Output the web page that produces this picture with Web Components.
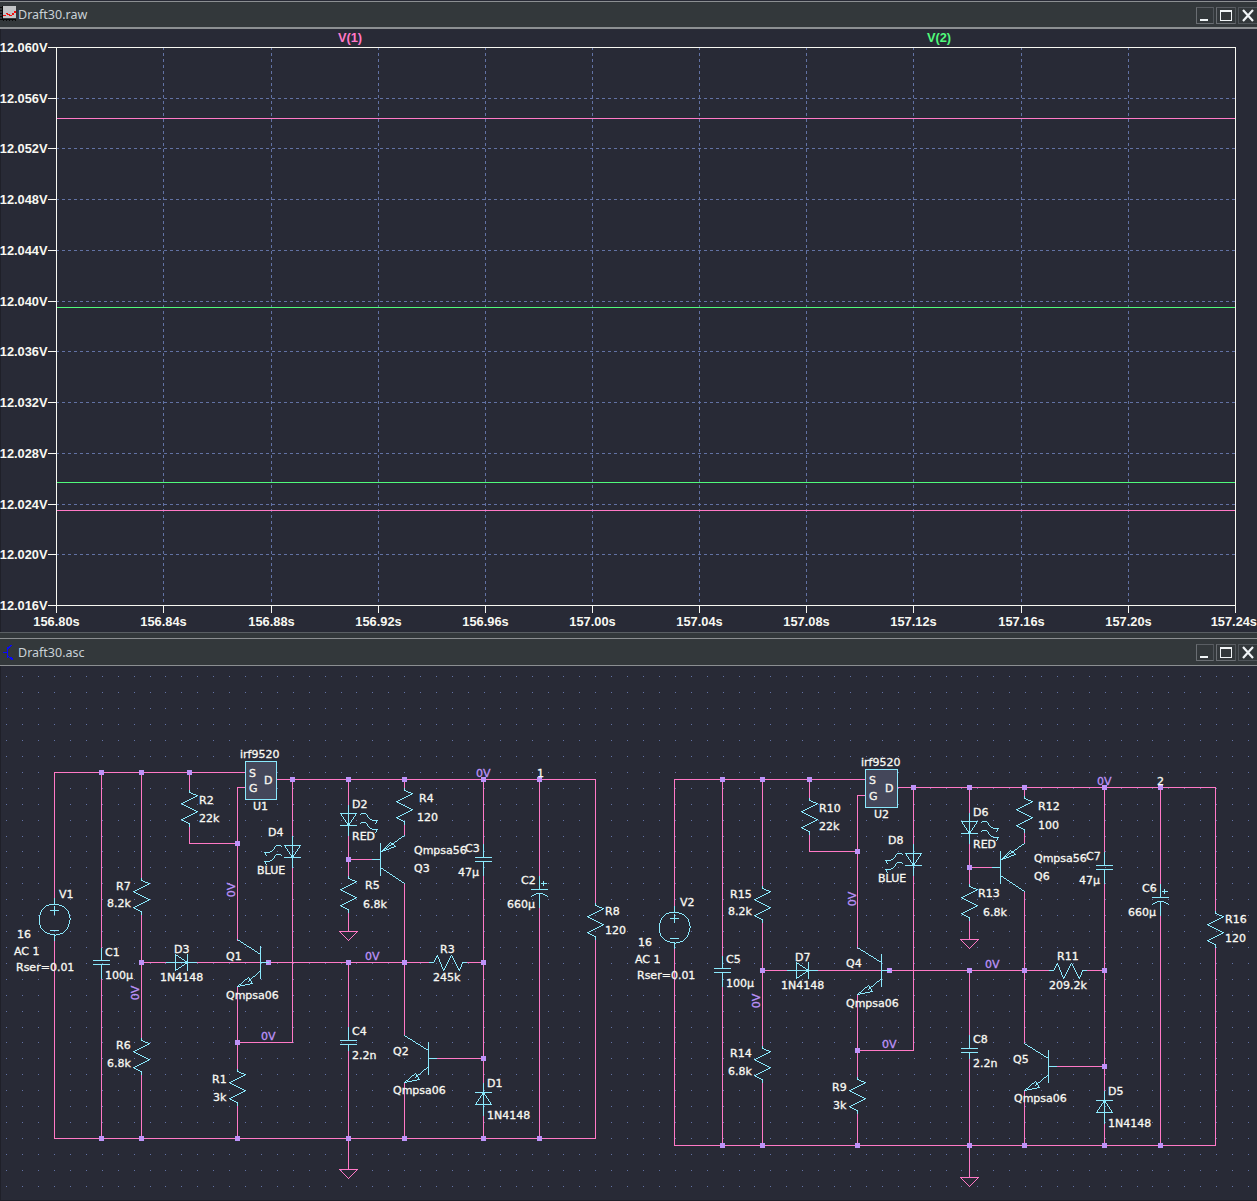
<!DOCTYPE html>
<html>
<head>
<meta charset="utf-8">
<title>LTspice</title>
<style>
  html, body { margin: 0; padding: 0; background: #282a36; overflow: hidden; }
</style>
</head>
<body>
<lt-app>
  <lt-window name="Draft30.raw" bar="25" rule="2" top="1">
    <svg slot="icon" width="17" height="17" viewBox="0 0 17 17" shape-rendering="crispEdges">
      <rect x="3" y="0" width="13" height="12" fill="#c2c4c6"/>
      <path d="M3 9h3v-2h2v1h2v1h2v-2h2v-2h2v2h-2v2h-2v1h-3v-1h-2v-1h-1v2h-3z" fill="#f01010"/>
      <path d="M0 1h2v1h-2zM0 4h2v1h-2zM0 7h2v1h-2zM0 10h2v1h-2zM0 13h2v1h-2zM3 13h1v2h-1zM6 13h1v2h-1zM9 13h1v2h-1zM12 13h1v2h-1zM15 13h1v2h-1z" fill="#0a0a0a"/>
      <path d="M2 0h1v13h-1zM2 13h14v1h-14z" fill="#0a0a0a"/>
    </svg>
    <lt-plot></lt-plot>
  </lt-window>
  <lt-splitter></lt-splitter>
  <lt-window name="Draft30.asc" bar="26" rule="1" top="0">
    <svg slot="icon" width="17" height="17" viewBox="0 0 17 17" shape-rendering="crispEdges">
      <path d="M2.5 8.5h5M7.5 3v11M7.5 5l4-4M7.5 12l5 4" fill="none" stroke="#0808ff"/>
      <path d="M10 13h2v1h1v2h-2v-1h-1z" fill="#0808ff"/>
    </svg>
    <lt-schematic></lt-schematic>
  </lt-window>
</lt-app>

<script>
// Contenedor de la pagina
class LtApp extends HTMLElement {
  constructor() {
    super();
    this.attachShadow({ mode: "open" }).innerHTML = `
      <style>
        :host { display: flex; flex-direction: column; width: 1257px; height: 1201px; background: #282a36; }
      </style>
      <slot></slot>`;
  }
}

// Barrita entre las dos ventanas
class LtSplitter extends HTMLElement {
  constructor() {
    super();
    this.attachShadow({ mode: "open" }).innerHTML = `
      <style>
        :host { display: block; height: 5px; background: #33383b; border-top: 1px solid #5a5f64; }
      </style>`;
  }
}

// Botones de minimizar, maximizar y cerrar
class LtCaption extends HTMLElement {
  constructor() {
    super();
    this.attachShadow({ mode: "open" }).innerHTML = `
      <style>
        :host { display: flex; gap: 2px; align-items: stretch; height: 16px; }
        .b { width: 16px; height: 15px; border: 1px solid #6a6e73; border-right-color: #50555a; border-top-color: #5a5e63;
             display: flex; align-items: center; justify-content: center; }
        .m { width: 18px; }
        .x { width: 18px; border-color: #50555a; border-right: 0; }
        svg { display: block; }
      </style>
      <div class="b"><svg width="16" height="15" viewBox="0 0 16 15" shape-rendering="crispEdges"><rect x="3" y="11" width="8" height="2" fill="#f0f4f6"/></svg></div>
      <div class="b m"><svg width="18" height="15" viewBox="0 0 18 15" shape-rendering="crispEdges"><rect x="3.5" y="2.5" width="11" height="10" fill="none" stroke="#f0f4f6"/><rect x="3" y="2" width="12" height="2" fill="#f0f4f6"/></svg></div>
      <div class="b x"><svg width="18" height="15" viewBox="0 0 18 15"><path d="M4 2l10 11M14 2l-10 11" stroke="#f0f4f6" stroke-width="2.2" fill="none"/></svg></div>`;
  }
}

// Ventana con barra de titulo y contenido
class LtWindow extends HTMLElement {
  constructor() {
    super();
    const barH = this.getAttribute("bar");
    const rule = this.getAttribute("rule");
    const top = this.getAttribute("top");
    this.attachShadow({ mode: "open" }).innerHTML = `
      <style>
        :host { display: block; margin-top: ${top}px; }
        .bar {
          display: flex; align-items: center; height: ${barH}px;
          background: #33383b; border-top: 1px solid #8c8f92; border-bottom: ${rule}px solid #8c8f92;
          color: #c9d1d6; font: 12.5px "Noto Sans", "Open Sans", sans-serif;
        }
        .icon { display: flex; width: 18px; height: 17px; margin-right: 0; }
        .name { flex: 1; }
      </style>
      <div class="bar">
        <div class="icon"><slot name="icon"></slot></div>
        <span class="name">${this.getAttribute("name")}</span>
        <lt-caption></lt-caption>
      </div>
      <slot></slot>`;
  }
}

const PINK = "#ff79c6", CYAN = "#8be9fd", LILAC = "#bd93f9", GREEN = "#50fa7b", WHITE = "#f8f8f2", GRID = "#6272a4";

// Grafica de las tensiones
class LtPlot extends HTMLElement {
  constructor() {
    super();
    const root = this.attachShadow({ mode: "open" });
    const L = 56, R = 1235, T = 47, B = 605;
    const rows = [47, 98, 148, 199, 250, 301, 351, 402, 453, 504, 554, 605];
    const cols = [56, 163, 271, 378, 485, 592, 699, 806, 913, 1021, 1128, 1235];
    const yLab = ["12.060V", "12.056V", "12.052V", "12.048V", "12.044V", "12.040V", "12.036V", "12.032V", "12.028V", "12.024V", "12.020V", "12.016V"];
    const xLab = ["156.80s", "156.84s", "156.88s", "156.92s", "156.96s", "157.00s", "157.04s", "157.08s", "157.12s", "157.16s", "157.20s", "157.24s"];
    let s = "";
    rows.forEach((y, i) => {
      if (i > 0 && i < rows.length - 1) s += `<line class="grid" x1="${L}" x2="${R}" y1="${y + .5}" y2="${y + .5}"/>`;
      s += `<line class="frame" x1="48" x2="${L}" y1="${y + .5}" y2="${y + .5}"/>`;
      s += `<text class="ax" x="47.5" y="${y + 5}" text-anchor="end">${yLab[i]}</text>`;
    });
    cols.forEach((x, i) => {
      if (i > 0 && i < cols.length - 1) s += `<line class="grid" y1="${T}" y2="${B}" x1="${x + .5}" x2="${x + .5}"/>`;
      s += `<line class="frame" y1="${B}" y2="613" x1="${x + .5}" x2="${x + .5}"/>`;
      // la ultima etiqueta se pega al borde para no cortarse
      if (i === cols.length - 1) s += `<text class="ax" x="1257" y="626" text-anchor="end">${xLab[i]}</text>`;
      else s += `<text class="ax" x="${x + .5}" y="626" text-anchor="middle">${xLab[i]}</text>`;
    });
    s += `<rect class="frame" x="${L + .5}" y="${T + .5}" width="${R - L}" height="${B - T}" fill="none"/>`;
    [[118, PINK], [307, GREEN], [482, GREEN], [510, PINK]].forEach(([y, c]) => {
      s += `<line x1="${L + 1}" x2="${R}" y1="${y + .5}" y2="${y + .5}" stroke="${c}"/>`;
    });
    s += `<text class="ax" x="350" y="42" text-anchor="middle" style="fill:${PINK}">V(1)</text>`;
    s += `<text class="ax" x="939" y="42" text-anchor="middle" style="fill:${GREEN}">V(2)</text>`;
    root.innerHTML = `
      <style>
        :host { display: block; height: 603px; }
        svg { display: block; }
        .grid { stroke: ${GRID}; stroke-dasharray: 3 3; }
        .frame { stroke: ${WHITE}; }
        .ax { font: 700 12.8px "Liberation Sans", Arial, sans-serif; fill: ${WHITE}; }
        line, rect { shape-rendering: crispEdges; }
      </style>
      <svg width="1257" height="603" viewBox="0 29 1257 603">
        <rect x="0" y="29" width="1" height="603" style="fill:#1f2029"/>
        ${s}
      </svg>`;
  }
}

// Esquematico: dibuja dos veces el mismo circuito con otras columnas y filas
class LtSchematic extends HTMLElement {
  constructor() {
    super();
    this.pink = "";
    this.cyan = "";
    this.marks = "";
    this.texts = "";
    const root = this.attachShadow({ mode: "open" });

    this.circuit({ l: 54, c1: 101, r7: 141, r2: 189, q: 237, u: 245, uw: 31, b: 268, d: 292, r5: 348, q3: 404, c3: 483, c2: 539, r8: 595, bar1: 260, t: 772, w: 779, bot: 1138, dy: 0 });
    this.circuit({ l: 674, c1: 722, r7: 762, r2: 809, q: 857, u: 865, uw: 32, b: 889, d: 913, r5: 969, q3: 1024, c3: 1104, c2: 1160, r8: 1215, bar1: 881, t: 779, w: 787, bot: 1145, dy: 8 });

    // Etiquetas: texto, x izquierda, y centro
    [
      ["V1", 59, 894], ["16", 17, 934], ["AC 1", 14, 951], ["Rser=0.01", 16, 967], ["C1", 105, 952], ["100\u00b5", 105, 975],
      ["D3", 174, 949], ["1N4148", 160, 977], ["Q1", 226, 956], ["Qmpsa06", 226, 995], ["R7", 116, 886], ["8.2k", 107, 903],
      ["R6", 116, 1045], ["6.8k", 107, 1063], ["R1", 212, 1079], ["3k", 213, 1097], ["R2", 199, 800], ["22k", 199, 818],
      ["irf9520", 240, 754], ["U1", 253, 806], ["S", 249, 773], ["G", 249, 788], ["D", 264, 780], ["D4", 268, 832], ["BLUE", 257, 870],
      ["D2", 352, 804], ["RED", 352, 836], ["R4", 419, 798], ["120", 417, 817], ["Qmpsa56", 414, 850], ["C3", 465, 848], ["Q3", 414, 868],
      ["47\u00b5", 458, 872], ["R5", 365, 885], ["6.8k", 363, 904], ["C2", 521, 880], ["660\u00b5", 507, 904], ["R8", 605, 911], ["120", 605, 930],
      ["R3", 440, 949], ["245k", 433, 977], ["C4", 352, 1031], ["2.2n", 352, 1055], ["Q2", 393, 1051], ["Qmpsa06", 393, 1090],
      ["D1", 487, 1083], ["1N4148", 487, 1115], ["1", 537, 773],
      ["V2", 680, 902], ["16", 638, 942], ["AC 1", 635, 959], ["Rser=0.01", 637, 975], ["C5", 726, 959], ["100\u00b5", 726, 983],
      ["D7", 795, 957], ["1N4148", 781, 985], ["Q4", 846, 963], ["Qmpsa06", 846, 1003], ["R15", 730, 894], ["8.2k", 728, 911],
      ["R14", 730, 1053], ["6.8k", 728, 1071], ["R9", 832, 1087], ["3k", 833, 1105], ["R10", 819, 808], ["22k", 819, 826],
      ["irf9520", 861, 762], ["U2", 874, 814], ["S", 869, 780], ["G", 869, 796], ["D", 885, 788], ["D8", 888, 840], ["BLUE", 878, 878],
      ["D6", 973, 812], ["RED", 973, 844], ["R12", 1038, 806], ["100", 1038, 825], ["Qmpsa56", 1034, 858], ["C7", 1086, 856], ["Q6", 1034, 876],
      ["47\u00b5", 1079, 880], ["R13", 978, 893], ["6.8k", 983, 912], ["C6", 1142, 888], ["660\u00b5", 1128, 912], ["R16", 1225, 919], ["120", 1225, 938],
      ["R11", 1057, 956], ["209.2k", 1049, 985], ["C8", 973, 1039], ["2.2n", 973, 1063], ["Q5", 1013, 1059], ["Qmpsa06", 1014, 1098],
      ["D5", 1108, 1091], ["1N4148", 1108, 1123], ["2", 1157, 781]
    ].forEach(([t, x, y]) => { this.texts += `<text x="${x}" y="${y + 4}">${t}</text>`; });

    [[261, 1036], [365, 956], [476, 773], [882, 1044], [985, 964], [1097, 781]].forEach(([x, y]) => {
      this.texts += `<text class="v" x="${x}" y="${y + 4}">0V</text>`;
    });
    [[231, 890], [135, 993], [852, 899], [756, 1001]].forEach(([x, y]) => {
      this.texts += `<text class="v" text-anchor="middle" transform="translate(${x + 4} ${y}) rotate(-90)">0V</text>`;
    });

    // Puntos de la rejilla
    let dots = "";
    for (let j = 0; j < 34; j++) {
      const y = Math.round(1138 - 29 * 15.92 + j * 15.92);
      for (let i = 0; i < 79; i++) {
        const x = Math.round(54 - 3 * 15.92 + i * 15.92);
        dots += `M${x} ${y}h1v1h-1z`;
      }
    }

    root.innerHTML = `
      <style>
        :host { display: block; height: 535px; }
        svg { display: block; }
        .art { shape-rendering: crispEdges; }
        text { font: 400 11px "DejaVu Sans", "Noto Sans", sans-serif; fill: ${WHITE}; stroke: ${WHITE}; stroke-width: .3px; }
        .v { fill: ${LILAC}; stroke: ${LILAC}; }
      </style>
      <svg width="1257" height="535" viewBox="0 666 1257 535">
        <path class="art" d="${dots}" style="fill:${GRID}"/>
        <rect class="art" x="0" y="666" width="1" height="535" style="fill:#1f2029"/>
        <rect class="art" x="0" y="1200" width="1257" height="1" style="fill:#1f2029"/>
        <path class="art" d="${this.pink}" style="fill:${PINK}"/>
        ${this.marks}
        <path class="art" d="${this.cyan}" style="fill:${CYAN}"/>
        ${this.texts}
      </svg>`;
  }

  // Polilinea de cable rosa
  wire(...p) { this.pink += this.poly(p); }
  // Polilinea de componente cian
  part(...p) { this.cyan += this.poly(p); }

  // Trazo de un pixel sin suavizado, como lo dibuja el programa original
  poly(p) {
    let d = "";
    for (let i = 0; i + 3 < p.length; i += 2) {
      let [x0, y0, x1, y1] = [p[i], p[i + 1], p[i + 2], p[i + 3]];
      if (x0 === x1 || y0 === y1) {
        d += `M${Math.min(x0, x1)} ${Math.min(y0, y1)}h${Math.abs(x1 - x0) + 1}v${Math.abs(y1 - y0) + 1}h${-(Math.abs(x1 - x0) + 1)}z`;
        continue;
      }
      const dx = Math.abs(x1 - x0), dy = -Math.abs(y1 - y0);
      const sx = x0 < x1 ? 1 : -1, sy = y0 < y1 ? 1 : -1;
      let err = dx + dy;
      for (;;) {
        d += `M${x0} ${y0}h1v1h-1z`;
        if (x0 === x1 && y0 === y1) break;
        const e2 = 2 * err;
        if (e2 >= dy) { err += dy; x0 += sx; }
        if (e2 <= dx) { err += dx; y0 += sy; }
      }
    }
    return d;
  }

  resistor(x, y) { this.part(x, y, x, y + 2, x + 8, y + 5, x - 8, y + 13, x + 8, y + 21, x - 8, y + 29, x, y + 33, x, y + 36); }

  cap(x, y0, p1, y1) {
    this.part(x, y0, x, p1);
    this.part(x - 8, p1, x + 8, p1);
    this.part(x - 8, p1 + 4, x + 8, p1 + 4);
    this.part(x, p1 + 4, x, y1);
  }

  gnd(x, y) { this.wire(x - 9, y, x + 9, y, x, y + 9, x - 9, y); }

  junction(x, y) { this.marks += `<rect class="art" x="${x - 2}" y="${y - 2}" width="5" height="5" style="fill:${LILAC}"/>`; }

  // Flechitas del LED
  led(x, y, dir) {
    for (const o of [0, 9]) {
      const a = y + o;
      this.part(x, a, x + dir * 2, a - 1, x + dir * 5, a - 1, x + dir * 9, a + 4, x + dir * 12, a + 6, x + dir * 17, a + 6);
      this.part(x + dir * 17, a + 6, x + dir * 15, a + 9);
    }
  }

  // Circulo de la fuente como polilinea
  circle(cx, cy, r) {
    const pts = [];
    for (let i = 0; i <= 64; i++) {
      const a = i / 64 * 2 * Math.PI;
      pts.push(Math.round(cx + r * Math.cos(a)), Math.round(cy + r * Math.sin(a)));
    }
    this.part(...pts);
  }

  npn(cx, bar, cy, end) {
    this.part(cx, cy - 23, bar, cy - 8);
    this.part(bar, cy - 16, bar, cy + 16);
    this.part(bar, cy, end, cy);
    this.part(bar, cy + 8, cx + 11, cy + 19);
    this.part(cx, cy + 24, cx + 11, cy + 15, cx + 15, cy + 21, cx, cy + 24);
  }

  circuit(p) {
    const { l, c1, r7, r2, q, u, uw, b, d, r5, q3, c3, c2, r8, bar1, t, w, bot, dy } = p;
    const Y = v => v + dy;
    const W = this.wire.bind(this), P = this.part.bind(this);

    // Cables
    W(l, t, l, Y(898)); W(l, Y(940), l, bot);
    W(l, t, u, t);
    W(l, bot, r8, bot);
    W(c1, t, c1, Y(948)); W(c1, Y(978), c1, bot);
    W(r7, t, r7, Y(878)); W(r7, Y(914), r7, Y(1038)); W(r7, Y(1074), r7, bot);
    W(r2, t, r2, Y(790)); W(r2, Y(826), r2, Y(843), q, Y(843));
    W(u, Y(787), q, Y(787), q, Y(917));
    W(q, Y(917), q, Y(940)); W(q, Y(986), q, Y(1069)); W(q, Y(1105), q, bot);
    W(u + uw, w, r8, w, r8, Y(903)); W(r8, Y(939), r8, bot);
    W(d, w, d, Y(836)); W(d, Y(867), d, Y(1042), q, Y(1042));
    W(r7, Y(962), r7 + 25, Y(962)); W(r7 + 55, Y(962), q3 + 25, Y(962));
    W(q3 + 62, Y(962), c3, Y(962));
    W(r5, w, r5, Y(805)); W(r5, Y(835), r5, Y(876)); W(r5, Y(912), r5, Y(931));
    W(r5, Y(859), q3 - 32, Y(859));
    W(r5, Y(962), r5, Y(1027)); W(r5, Y(1050), r5, Y(1169));
    W(q3, w, q3, Y(788)); W(q3, Y(824), q3, Y(835)); W(q3, Y(883), q3, Y(1035)); W(q3, Y(1082), q3, bot);
    W(c3, w, c3, Y(844)); W(c3, Y(875), c3, Y(1083)); W(c3, Y(1115), c3, bot);
    W(q3 + 32, Y(1058), c3, Y(1058));
    W(c2, w, c2, Y(876)); W(c2, Y(907), c2, bot);
    this.gnd(r5, Y(931));
    this.gnd(r5, Y(1169));

    // Fuente de tension
    const vy = Y(919);
    P(l, Y(898), l, vy - 15); P(l, vy + 15, l, Y(940));
    P(l - 4, vy - 9, l + 4, vy - 9); P(l, vy - 13, l, vy - 5);
    P(l - 4, vy + 11, l + 4, vy + 11);
    this.circle(l, vy, 15.5);

    // Resistencias
    this.resistor(r7, Y(878)); this.resistor(r7, Y(1038)); this.resistor(r2, Y(790));
    this.resistor(q, Y(1069)); this.resistor(q3, Y(788)); this.resistor(r5, Y(876)); this.resistor(r8, Y(903));
    const ry = Y(962), rx = q3 + 25;
    P(rx, ry, rx + 4, ry, rx + 8, ry - 7, rx + 14, ry + 8, rx + 22, ry - 7, rx + 30, ry + 8, rx + 33, ry, rx + 37, ry);

    // Condensadores
    this.cap(c1, Y(948), Y(960), Y(978));
    this.cap(c3, Y(844), Y(857), Y(875));
    this.cap(r5, Y(1027), Y(1040), Y(1050));
    P(c2, Y(876), c2, Y(889)); P(c2 - 8, Y(889), c2 + 8, Y(889));
    P(c2, Y(893), c2, Y(907));
    P(c2 - 8, Y(896), c2 - 5, Y(894), c2 - 2, Y(893), c2 + 2, Y(893), c2 + 5, Y(894), c2 + 8, Y(896));
    P(c2 + 2, Y(883), c2 + 7, Y(883)); P(c2 + 4, Y(881), c2 + 4, Y(885));

    // Diodos
    P(r7 + 25, Y(962), r7 + 55, Y(962));
    P(r7 + 34, Y(954), r7 + 34, Y(970), r7 + 46, Y(962), r7 + 34, Y(954));
    P(r7 + 46, Y(954), r7 + 46, Y(970));
    P(c3, Y(1083), c3, Y(1115));
    P(c3 - 8, Y(1092), c3 + 8, Y(1092));
    P(c3, Y(1092), c3 - 8, Y(1104), c3 + 8, Y(1104), c3, Y(1092));

    // LEDs
    P(d, Y(836), d, Y(867));
    P(d - 8, Y(845), d + 8, Y(845), d, Y(857), d - 8, Y(845));
    P(d - 8, Y(857), d + 8, Y(857));
    this.led(d - 11, Y(846), -1);
    P(r5, Y(805), r5, Y(835));
    P(r5 - 8, Y(813), r5 + 8, Y(813), r5, Y(825), r5 - 8, Y(813));
    P(r5 - 8, Y(825), r5 + 8, Y(825));
    this.led(r5 + 12, Y(814), 1);

    // Transistores
    this.npn(q, bar1, Y(962), b);
    this.npn(q3, q3 + 24, Y(1058), q3 + 32);
    const pb = q3 - 24, py = Y(859);
    P(q3, py - 24, pb + 1, py - 8);
    P(pb, py - 16, pb, py + 16);
    P(pb - 8, py, pb, py);
    P(pb, py + 8, q3, py + 24);
    P(pb + 1, py - 8, pb + 10, py - 17, pb + 15, py - 13, pb + 1, py - 8);

    // Caja de U1/U2
    this.marks += `<rect x="${u + .5}" y="${Y(761) + .5}" width="${uw}" height="38" shape-rendering="crispEdges" style="fill:#44475a" stroke="${CYAN}"/>`;

    // Uniones
    [[c1, t], [r7, t], [r2, t], [q, Y(843)], [r7, Y(962)], [b, Y(962)], [d, w], [r5, w], [q3, w], [c3, w], [c2, w],
     [r5, Y(859)], [r5, Y(962)], [q3, Y(962)], [c3, Y(962)], [c3, Y(1058)], [q, Y(1042)],
     [c1, bot], [r7, bot], [q, bot], [r5, bot], [q3, bot], [c3, bot], [c2, bot]
    ].forEach(([x, y]) => this.junction(x, y));
  }
}

customElements.define("lt-app", LtApp);
customElements.define("lt-splitter", LtSplitter);
customElements.define("lt-caption", LtCaption);
customElements.define("lt-window", LtWindow);
customElements.define("lt-plot", LtPlot);
customElements.define("lt-schematic", LtSchematic);
</script>
</body>
</html>
